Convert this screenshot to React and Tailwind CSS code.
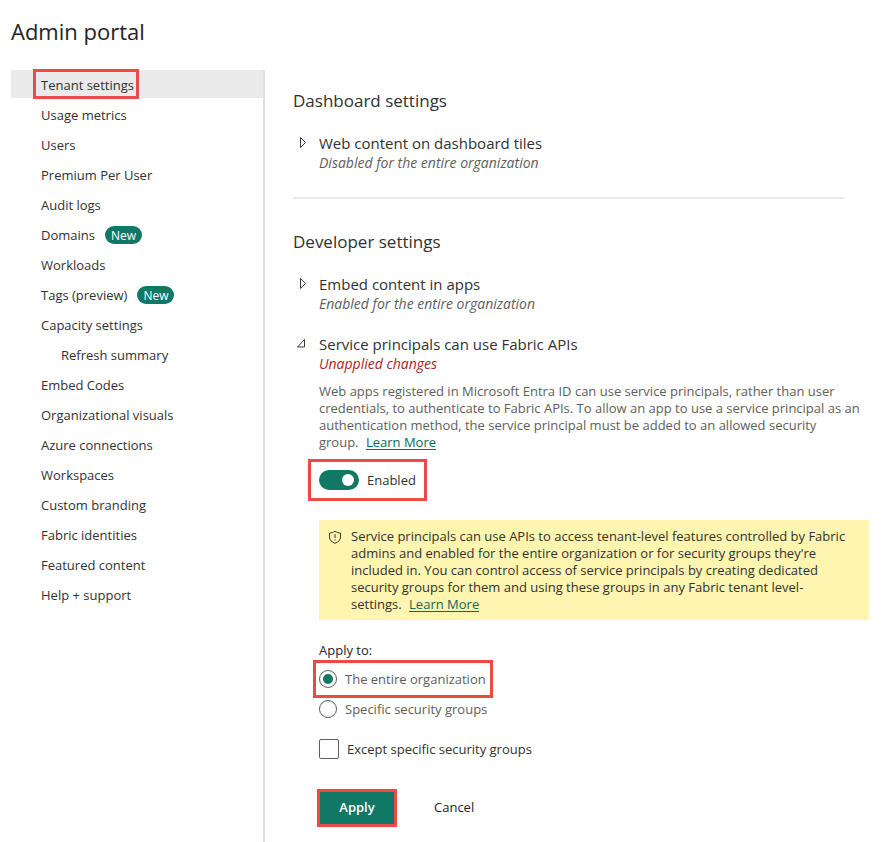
import { useState } from 'react';

const navItems = [
    { label: 'Tenant settings', active: true },
    { label: 'Usage metrics' },
    { label: 'Users' },
    { label: 'Premium Per User' },
    { label: 'Audit logs' },
    { label: 'Domains', isNew: true },
    { label: 'Workloads' },
    { label: 'Tags (preview)', isNew: true },
    { label: 'Capacity settings' },
    { label: 'Refresh summary', nested: true },
    { label: 'Embed Codes' },
    { label: 'Organizational visuals' },
    { label: 'Azure connections' },
    { label: 'Workspaces' },
    { label: 'Custom branding' },
    { label: 'Fabric identities' },
    { label: 'Featured content' },
    { label: 'Help + support' },
];

const NavItem = ({ label, active, isNew, nested }) => (
    <li>
        <a
            href="#"
            aria-current={active ? 'page' : undefined}
            className={`flex h-7 items-center ${nested ? 'pl-[50px]' : 'pl-[30px]'} ${active ? 'bg-[#eaeaea]' : 'hover:bg-[#f3f2f1]'}`}
        >
            <span className={`pt-[2px] leading-[22px] ${active ? '-ml-[5px] pr-[2px] pl-[5px] outline-3 outline-[#eb4a46]' : ''}`}>
                {label}
            </span>
            {isNew && (
                <span className="mt-[2px] ml-[10px] h-[18px] rounded-full bg-[#117865] px-[6px] text-[12px] leading-5 font-medium text-white">
                    New
                </span>
            )}
        </a>
    </li>
);

const Caret = ({ open }) => (
    <svg width="14" height="14" viewBox="0 0 14 14" fill="none" stroke="#3b3a39" className="mt-1 shrink-0" aria-hidden="true">
        {open ? <path d="M11.5 2.5v7.5H4.5z" /> : <path d="M7.5 1.5v10l5-5z" />}
    </svg>
);

const Setting = ({ title, status, open, changed, children }) => (
    <div className="flex gap-3">
        <button type="button" className="flex w-[14px] shrink-0 self-start" aria-expanded={!!open} aria-label={title}>
            <Caret open={open} />
        </button>
        <div className="min-w-0 flex-1">
            <h3 className="text-[15px] leading-[22px]">{title}</h3>
            <p className={`text-[14px] leading-[18px] italic ${changed ? 'text-[#a4262c]' : 'text-[#605e5c]'}`}>{status}</p>
            {children}
        </div>
    </div>
);

const LearnMore = () => (
    <a href="#" className="ml-1 text-[#0c695a] underline underline-offset-2">
        Learn More
    </a>
);

const Radio = ({ label, value, selected, onSelect }) => (
    <label className="flex h-[30px] items-center gap-2 text-[#605e5c]">
        <input
            type="radio"
            name="applyTo"
            value={value}
            checked={selected === value}
            onChange={() => onSelect(value)}
            className="grid size-[18px] appearance-none place-content-center rounded-full border border-[#605e5c] before:size-[10px] before:rounded-full checked:before:bg-[#117865]"
        />
        {label}
    </label>
);

const App = () => {
    const [enabled, setEnabled] = useState(true);
    const [applyTo, setApplyTo] = useState('all');
    const [except, setExcept] = useState(false);

    return (
        <div className="flex min-h-screen flex-col bg-white pl-[11px] font-['Open_Sans','Noto_Sans',sans-serif] text-[13px] leading-5 text-[#323130]">
            <h1 className="pt-[15px] pb-[23px] text-[22px] leading-8 text-[#252423]">Admin portal</h1>

            <div className="flex flex-1">
                <nav className="w-[254px] shrink-0 border-r-2 border-[#e1e1e1]">
                    <ul className="flex flex-col gap-[2px]">
                        {navItems.map((item) => (
                            <NavItem key={item.label} {...item} />
                        ))}
                    </ul>
                </nav>

                <main className="min-w-0 flex-1 pt-[19px] pr-[15px] pb-[18px] pl-7">
                    <section className="mr-6 border-b-2 border-[#eaeaea] pb-[25px]">
                        <h2 className="mb-[19px] text-[17px] leading-6">Dashboard settings</h2>
                        <Setting title="Web content on dashboard tiles" status="Disabled for the entire organization" />
                    </section>

                    <section className="pt-[31px]">
                        <h2 className="mb-[19px] text-[17px] leading-6">Developer settings</h2>
                        <div className="flex flex-col gap-5">
                            <Setting title="Embed content in apps" status="Enabled for the entire organization" />
                            <Setting title="Service principals can use Fabric APIs" status="Unapplied changes" open changed>
                                <p className="mt-[10px] leading-[17px] text-[#605e5c]">
                                    Web apps registered in Microsoft Entra ID can use service principals, rather than user
                                    credentials, to authenticate to Fabric APIs. To allow an app to use a service principal as an
                                    authentication method, the service principal must be added to an allowed security
                                    <br />
                                    group. <LearnMore />
                                </p>

                                <label className="mt-[19px] flex h-5 w-fit items-center gap-2 outline-3 outline-offset-8 outline-[#eb4a46]">
                                    <input
                                        type="checkbox"
                                        role="switch"
                                        checked={enabled}
                                        onChange={(e) => setEnabled(e.target.checked)}
                                        className="flex h-5 w-10 appearance-none items-center rounded-full bg-[#8a8886] px-[5px] before:size-3 before:rounded-full before:bg-white checked:justify-end checked:bg-[#117865]"
                                    />
                                    Enabled
                                </label>

                                <div className="mt-[30px] flex gap-2 bg-[#fef5b1] px-2 pt-2 pb-[7px]">
                                    <svg width="16" height="16" viewBox="0 0 16 16" fill="none" stroke="#3b3a39" className="mt-[1px] shrink-0" aria-hidden="true">
                                        <path d="M8 2.2c1.6 1.2 3.4 1.8 5.5 1.8v4c0 3-2 5-5.5 6.3C4.5 13 2.5 11 2.5 8V4c2.1 0 3.9-.6 5.5-1.8z" />
                                        <path d="M8 5v4M8 10.3v1.2" />
                                    </svg>
                                    <p className="leading-[17px]">
                                        Service principals can use APIs to access tenant-level features controlled by Fabric
                                        admins and enabled for the entire organization or for security groups they're included
                                        in. You can control access of service principals by creating dedicated security groups
                                        for them and using these groups in any Fabric tenant level-
                                        <br />
                                        settings. <LearnMore />
                                    </p>
                                </div>

                                <fieldset className="mt-5">
                                    <legend className="mb-1 text-[#252423]">Apply to:</legend>
                                    <div className="-ml-[2px] w-fit pr-[3px] pl-[2px] outline-3 outline-offset-1 outline-[#eb4a46]">
                                        <Radio label="The entire organization" value="all" selected={applyTo} onSelect={setApplyTo} />
                                    </div>
                                    <Radio label="Specific security groups" value="groups" selected={applyTo} onSelect={setApplyTo} />
                                </fieldset>

                                <label className="mt-[15px] flex h-5 w-fit items-center gap-2">
                                    <input
                                        type="checkbox"
                                        checked={except}
                                        onChange={(e) => setExcept(e.target.checked)}
                                        className="size-5 appearance-none rounded-[2px] border border-[#605e5c] checked:bg-[#117865]"
                                    />
                                    Except specific security groups
                                </label>

                                <div className="mt-[33px] flex h-8 gap-5 pl-px text-[#252423]">
                                    <button type="button" className="w-[74px] bg-[#117865] pb-[2px] font-semibold text-white outline-3 outline-[#eb4a46]">
                                        Apply
                                    </button>
                                    <button type="button" className="px-5 pb-[2px]">
                                        Cancel
                                    </button>
                                </div>
                            </Setting>
                        </div>
                    </section>
                </main>
            </div>
        </div>
    );
};

export default App;
